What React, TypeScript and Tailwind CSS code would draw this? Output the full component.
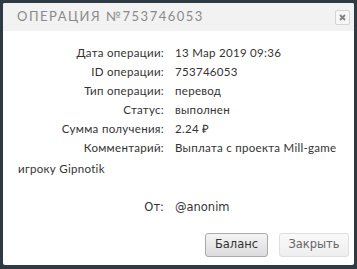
import React from "react";

const rows: [string, string][] = [
  ["Дата операции:", "13 Мар 2019 09:36"],
  ["ID операции:", "753746053"],
  ["Тип операции:", "перевод"],
  ["Статус:", "выполнен"],
  ["Сумма получения:", "2.24 ₽"],
  ["Комментарий:", "Выплата с проекта Mill-game"],
];

export default function App() {
  return (
    <div className="w-[357px] h-[269px] bg-[#2e3b45] p-[3px] overflow-hidden">
      <div className="w-[351px] h-[262px] bg-white flex flex-col rounded-[2px] overflow-hidden">
        <div className="h-[28px] bg-[#f2f2f2] flex items-center justify-between pl-[14px] pr-[4px] shrink-0">
          <span
            className="text-[13px] text-[#8a8a8a] tracking-[1.5px] uppercase"
            style={{ fontFamily: "Lato, 'Open Sans', sans-serif" }}
          >
            ОПЕРАЦИЯ №753746053
          </span>
          <div className="w-[15px] h-[15px] border border-[#d4d4d4] rounded-[2px] bg-[#f7f7f7] flex items-center justify-center">
            <svg width="7" height="7" viewBox="0 0 7 7">
              <path d="M1 1L6 6M6 1L1 6" stroke="#808080" strokeWidth="1.8" />
            </svg>
          </div>
        </div>
        <div
          className="flex flex-col pt-[12px] text-[11.5px] text-[#333] tracking-[0.3px]"
          style={{ fontFamily: "Lato, 'Open Sans', sans-serif" }}
        >
          {rows.map(([l, v]) => (
            <div key={l} className="flex h-[19px] items-center">
              <div className="w-[161px] text-right">{l}</div>
              <div className="pl-[11px] whitespace-nowrap">{v}</div>
            </div>
          ))}
          <div className="h-[23px] flex items-center pl-[15px]">игроку Gipnotik</div>
        </div>
        <div
          className="flex h-[20px] items-center mt-[18px] text-[11.5px] text-[#333]"
          style={{ fontFamily: "'DejaVu Sans', Verdana, sans-serif" }}
        >
          <div className="w-[161px] text-right">От:</div>
          <div className="pl-[11px]">@anonim</div>
        </div>
        <div className="flex justify-end gap-[11px] pr-[5px] mt-[15px]" style={{ fontFamily: "'DejaVu Sans', Verdana, sans-serif" }}>
          <button className="w-[63px] h-[24px] rounded-[3px] border border-[#a9a9a9] bg-gradient-to-b from-[#f4f4f4] to-[#dcdcdc] text-[11.5px] text-[#333]">
            Баланс
          </button>
          <button className="w-[70px] h-[24px] rounded-[3px] border border-[#dedede] bg-gradient-to-b from-[#fafafa] to-[#eeeeee] text-[11.5px] text-[#666]">
            Закрыть
          </button>
        </div>
      </div>
    </div>
  );
}
